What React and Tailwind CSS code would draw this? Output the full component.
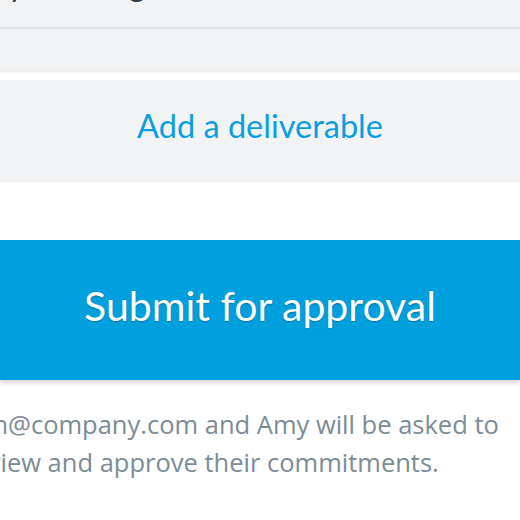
import React from "react";

const font = { fontFamily: '"Lato", "Noto Sans", sans-serif' };

const App = () => {
  return (
    <div
      className="w-[520px] h-[520px] overflow-hidden bg-white"
      style={font}
    >
      {/* meetings header, cut off at the top */}
      <div className="h-[29px] bg-[#f2f3f5] border-b-2 border-[#e1e2e5] overflow-hidden">
        <h2 className="-mt-[30px] -ml-[20px] text-[31px] leading-[31px] text-[#2b3a47] whitespace-nowrap">
          My Meetings
        </h2>
      </div>
      <div className="h-[41px] bg-[#f2f3f5] shadow-[0_2px_2px_rgba(0,0,0,0.08)]"></div>

      <div className="mt-[10px] h-[100px] bg-[#f2f3f5] shadow-[0_2px_2px_rgba(0,0,0,0.08)] flex items-center justify-center">
        <button className="-mt-[7px] text-[32.5px] text-[#0c9fdf] whitespace-nowrap">
          Add a deliverable
        </button>
      </div>

      <div className="mt-[60px] h-[140px] bg-[#00a0df] shadow-[0_3px_4px_rgba(0,0,0,0.15)] flex items-center justify-center">
        <button className="-mt-[8px] text-[41px] text-white whitespace-nowrap [text-shadow:0_1px_2px_rgba(0,0,0,0.25)]">
          Submit for approval
        </button>
      </div>

      <div
        className="mt-[25px] text-[25.5px] leading-[38px] text-[#7b8c96] whitespace-nowrap"
        style={{ fontFamily: '"Open Sans", "Noto Sans", sans-serif' }}
      >
        <p className="-ml-[45px]">john@company.com and Amy will be asked to</p>
        <p className="-ml-[37px]">review and approve their commitments.</p>
      </div>
    </div>
  );
};

export default App;
